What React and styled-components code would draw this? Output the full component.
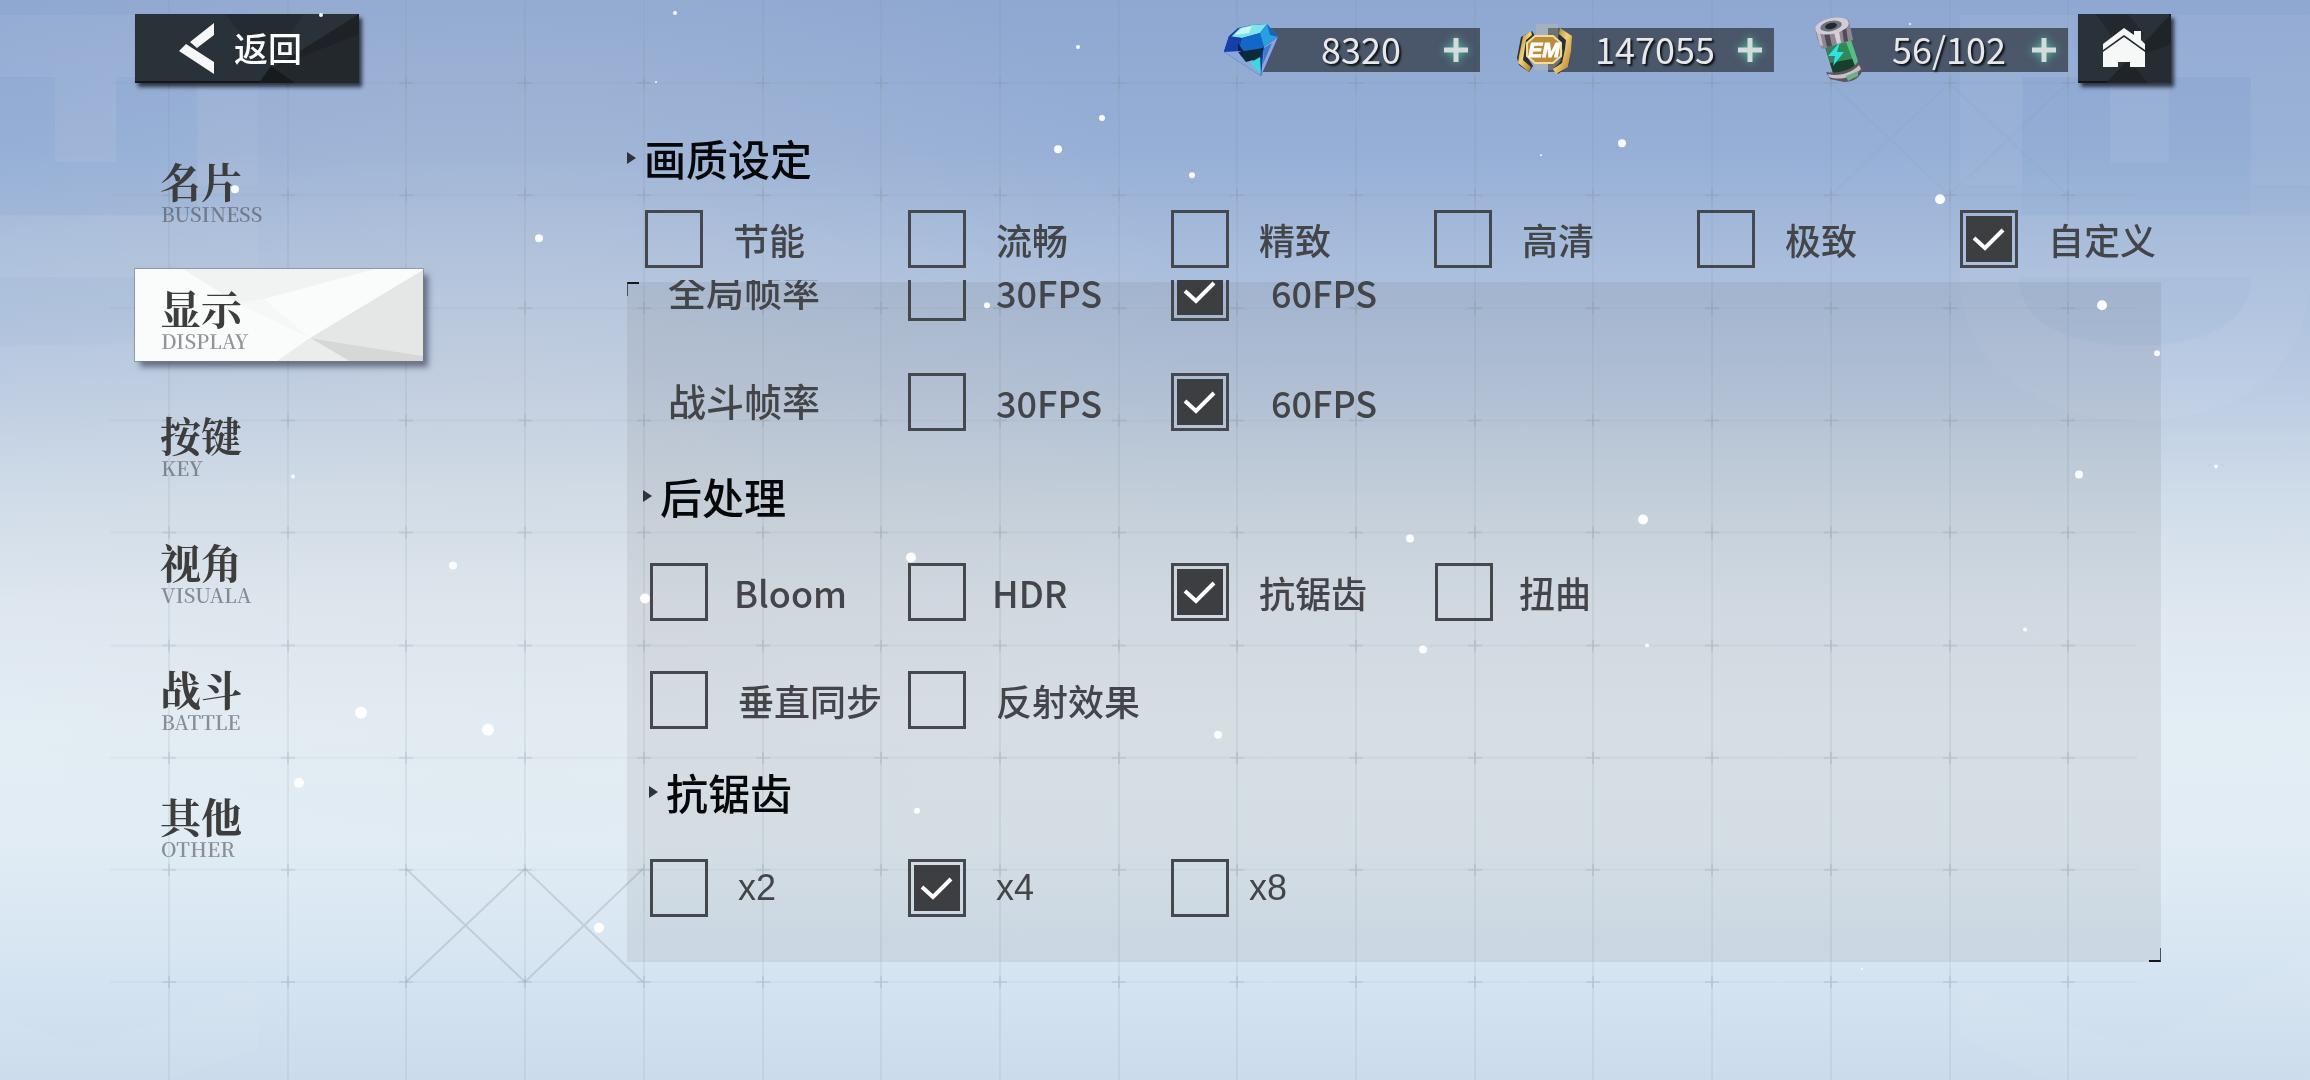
import React, { useState } from 'react';
import styled, { createGlobalStyle } from 'styled-components';

const GlobalStyle = createGlobalStyle`
  * {
    box-sizing: border-box;
  }

  body {
    margin: 0;
    font-family: 'Noto Sans CJK SC', 'Noto Sans', sans-serif;
    color: #434548;
  }

  button {
    font: inherit;
    color: inherit;
    border: none;
    padding: 0;
    background: none;
    cursor: pointer;
  }
`;

const Page = styled.div`
  position: relative;
  min-height: 100vh;
  overflow: hidden;
  padding: 14px 139px 119px 135px;
  background:
    radial-gradient(ellipse 700px 520px at 500px 380px, rgba(220, 218, 216, 0.26), rgba(220, 218, 216, 0)),
    linear-gradient(
      180deg,
      #8fa8d1 0%,
      #96afd6 14%,
      #a8bddc 24%,
      #b9cae2 35%,
      #cfdce9 46%,
      #dee7f0 56%,
      #e3edf4 67%,
      #e1ecf4 78%,
      #d6e5f2 89%,
      #cbdbec 100%
    );
`;

const Layer = styled.svg`
  position: absolute;
  inset: 0;
  width: 100%;
  height: 100%;
  pointer-events: none;
`;

const Header = styled.header`
  position: relative;
  display: flex;
  align-items: flex-start;
`;

const DarkButton = styled.button`
  position: relative;
  display: flex;
  align-items: center;
  justify-content: center;
  gap: 20px;
  width: ${({ $wide }) => ($wide ? '224px' : '93px')};
  height: 69px;
  padding: ${({ $wide }) => ($wide ? '0 13px 2px 0' : '0 2px 2px 0')};
  background: #2a3239;
  box-shadow: inset -2px -2px 0 #14171a, 3px 4px 4px rgba(10, 15, 25, 0.75);
  color: #fff;
  font-size: 34px;
  font-weight: 500;
  line-height: 40px;
`;

const Facets = styled.svg`
  position: absolute;
  inset: 0;
  width: 100%;
  height: 100%;
`;

const Glyph = styled.svg`
  position: relative;
  display: block;
`;

const ButtonText = styled.span`
  position: relative;
`;

const Wallet = styled.div`
  display: flex;
  gap: 68px;
  margin-left: auto;
  margin-right: 10px;
  padding-top: 14px;
`;

const Currency = styled.div`
  position: relative;
  display: flex;
  align-items: center;
  width: 226px;
  height: 44px;
  padding: 0 10px 0 26px;
  background: rgba(40, 46, 54, 0.68);
`;

const CurrencyIcon = styled.svg`
  position: absolute;
  left: -32px;
  top: -12px;
  overflow: visible;
`;

const Amount = styled.span`
  flex: 1;
  padding-bottom: 4px;
  text-align: center;
  font-size: 36px;
  line-height: 40px;
  color: #e6e8ea;
  text-shadow: 2px 2px 2px rgba(0, 0, 0, 0.8);
`;

const PlusButton = styled.button`
  width: 28px;
  height: 28px;

  svg {
    display: block;
    filter: drop-shadow(0 0 4px #4fc8a8);
  }
`;

const Main = styled.main`
  position: relative;
  display: flex;
  gap: 204px;
  padding-right: 10px;
`;

const Nav = styled.nav`
  display: flex;
  flex-direction: column;
  flex: 0 0 288px;
  gap: 35px;
  padding-top: 59px;
`;

const Tab = styled.button`
  position: relative;
  display: flex;
  flex-direction: column;
  align-items: flex-start;
  height: 92px;
  padding: 17px 0 0 25px;
  text-align: left;
  background: ${({ $active }) => ($active ? '#fafbfb' : 'none')};
  box-shadow: ${({ $active }) =>
    $active ? '0 0 0 1px rgba(120, 125, 130, 0.6), 5px 6px 6px rgba(40, 50, 70, 0.6)' : 'none'};
`;

const TabTitle = styled.span`
  position: relative;
  font-family: 'Noto Serif CJK SC', 'Noto Sans CJK SC', serif;
  font-size: 41px;
  font-weight: 700;
  line-height: 44px;
  color: #3d3d3d;
`;

const TabSub = styled.span`
  position: relative;
  padding-left: 1px;
  font-family: 'Noto Serif CJK SC', 'Liberation Serif', serif;
  font-size: 20px;
  font-weight: 600;
  line-height: 22px;
  color: rgba(70, 74, 82, 0.58);
`;

const Content = styled.div`
  flex: 1;
  min-width: 0;
  padding-top: 53px;
`;

const Heading = styled.h2`
  display: flex;
  align-items: center;
  gap: 8px;
  margin: 0;
  font-size: 42px;
  font-weight: 500;
  line-height: 44px;
  color: #060708;

  &::before {
    content: '';
    border-left: 9px solid #2e3338;
    border-top: 6px solid transparent;
    border-bottom: 6px solid transparent;
  }
`;

const PanelHeading = styled(Heading)`
  margin: ${({ $deep }) => ($deep ? '41px 0 45px 22px' : '43px 0 45px 16px')};
`;

const QualityRow = styled.div`
  display: flex;
  justify-content: space-between;
  padding: 30px 5px 12px 18px;
`;

const Panel = styled.section`
  position: relative;

  &::before,
  &::after {
    content: '';
    position: absolute;
    width: 11px;
    height: 12px;
  }

  &::before {
    left: 0;
    top: 2px;
    border-top: 2px solid #15181b;
    border-left: 1px solid #4a5056;
  }

  &::after {
    right: 0;
    bottom: 0;
    border-bottom: 2px solid #15181b;
    border-right: 1px solid #4a5056;
  }
`;

const Scroller = styled.div`
  overflow: hidden;
  padding-bottom: 45px;
  background: linear-gradient(180deg, transparent 2px, rgba(50, 42, 34, 0.075) 2px);
`;

const ScrollBody = styled.div`
  margin-top: -17px;
`;

const OptionGrid = styled.div`
  display: grid;
  grid-template-columns: 258px 263px 264px 1fr;
  align-items: center;
  row-gap: ${({ $loose }) => ($loose ? '52px' : '50px')};
  padding-left: 23px;
`;

const RowName = styled.span`
  padding: 0 0 4px 18px;
  font-size: 38px;
  font-weight: 500;
  line-height: 44px;
`;

const Option = styled.label`
  display: flex;
  align-items: center;
  gap: ${({ $gap }) => $gap || 30}px;
  font-size: 36px;
  font-weight: 500;
  line-height: 44px;
  white-space: nowrap;
  cursor: pointer;
`;

const LatinText = styled.span`
  font-family: 'Liberation Sans', sans-serif;
  font-weight: 400;
`;

const BoxWrap = styled.span`
  display: grid;
  width: 58px;
  height: 58px;

  > * {
    grid-area: 1 / 1;
  }
`;

const Box = styled.input`
  appearance: none;
  width: 58px;
  height: 58px;
  margin: 0;
  padding: 3px;
  border: 3px solid #45494d;
  cursor: pointer;

  &:checked {
    background: #3d3e41 content-box;
  }

  & + svg {
    visibility: hidden;
    pointer-events: none;
  }

  &:checked + svg {
    visibility: visible;
  }
`;

const columns = Array.from({ length: 17 }, (_, i) => Math.round(169 + i * 118.7));
const rows = Array.from({ length: 9 }, (_, i) => Math.round(83 + i * 112.3));

const flakes = [
  [321, 15, 2], [675, 13, 2], [1078, 47, 2], [1102, 118, 3], [1058, 149, 4],
  [1192, 175, 3], [1622, 143, 4], [1541, 155, 1], [1940, 199, 5], [539, 238, 4],
  [987, 305, 3], [2102, 305, 5], [2157, 353, 3], [2079, 474, 4], [2216, 466, 2],
  [1643, 519, 5], [1410, 538, 4], [911, 557, 5], [453, 565, 4], [645, 598, 5],
  [1423, 649, 4], [1647, 645, 2], [2025, 629, 2], [361, 712, 6], [488, 729, 6],
  [1218, 734, 4], [299, 782, 5], [917, 810, 3], [599, 927, 5], [293, 476, 2],
  [235, 189, 4], [1862, 968, 1], [1910, 24, 1], [656, 82, 1],
];

const tabs = [
  { id: 'business', title: '名片', sub: 'BUSINESS' },
  { id: 'display', title: '显示', sub: 'DISPLAY' },
  { id: 'key', title: '按键', sub: 'KEY' },
  { id: 'visual', title: '视角', sub: 'VISUALA' },
  { id: 'battle', title: '战斗', sub: 'BATTLE' },
  { id: 'other', title: '其他', sub: 'OTHER' },
];

const qualities = ['节能', '流畅', '精致', '高清', '极致', '自定义'];

const Backdrop = () => (
  <Layer viewBox="0 0 2310 1080" preserveAspectRatio="none" aria-hidden="true">
    {/* oversized block letters, barely visible */}
    <g fill="#fff" opacity="0.05">
      <path d="M0 15H258V185H197V77H0Z" />
      <path d="M55 77H116V162H55Z" />
      <path d="M0 215H258V277H0Z" />
      <path d="M1960 15H2310V77H2022V185H1960Z" />
      <path d="M2110 77H2169V162H2110ZM2251 77H2310V185H2251Z" />
      <path d="M1960 215H2310V290C2300 370 2240 420 2136 420C2020 420 1960 350 1960 277Z" />
      <path d="M1960 530H2310V680C2290 770 2200 760 2136 760C2020 750 1960 690 1960 600Z" opacity="0.5" />
      <path d="M1960 985L2138 1048L2310 950V1080H2050L1960 1035Z" />
      <path d="M258 985L84 1048L0 1015V1080H160L258 1048Z" />
    </g>
    <g fill="#7ba2d0" opacity="0.1">
      <path d="M0 77H55V162H116V77H197V215H0Z" />
      <path d="M0 277H230C220 330 170 345 60 345H0Z" opacity="0.5" />
      <path d="M2022 77H2110V162H2169V77H2251V215H2022Z" opacity="0.7" />
      <path d="M2019 277H2251C2251 325 2200 345 2136 345S2019 325 2019 277Z" opacity="0.8" />
    </g>
    <g stroke="#7d8894" strokeWidth="2">
      <g opacity="0.12">
        {columns.map((x) => (
          <line key={x} x1={x} y1="0" x2={x} y2="1080" />
        ))}
      </g>
      <g opacity="0.07">
        {rows.map((y) => (
          <line key={y} x1="110" y1={y} x2="2137" y2={y} />
        ))}
      </g>
      <g opacity="0.17">
        {rows.map((y) =>
          columns.map((x) => <path key={`${x}-${y}`} d={`M${x - 7} ${y}h14M${x} ${y - 6}v12`} />)
        )}
      </g>
      <path d="M406 868L525 981L643 868M406 981L525 868L643 981" fill="none" opacity="0.26" />
      <path d="M1831 83L1949 195L2068 83M1831 195L1949 83L2068 195" fill="none" opacity="0.07" />
    </g>
  </Layer>
);

const Snow = () => (
  <Layer viewBox="0 0 2310 1080" preserveAspectRatio="none" aria-hidden="true">
    {flakes.map(([x, y, r]) => (
      <circle key={`${x}-${y}`} cx={x} cy={y} r={r} fill="#fff" opacity="0.95" />
    ))}
  </Layer>
);

const Diamond = () => (
  <CurrencyIcon width="58" height="60" viewBox="0 0 58 60" aria-hidden="true">
    <path d="M7 20L16 12L30 9L44 8L56 21L39 60L2 36Z" fill="#0c3f9e" />
    <path d="M9 21L18 12L30 9L45 8L38 17L20 22Z" fill="#7fe3ee" />
    <path d="M12 19L20 12L30 10L27 17Z" fill="#c4f7f2" />
    <path d="M20 22L38 17L42 31L28 38L16 33Z" fill="#1268c6" />
    <path d="M38 17L45 8L56 21L42 31Z" fill="#2a9fe0" />
    <path d="M45 8L56 21L48 19Z" fill="#1565c4" />
    <path d="M7 20L20 22L16 35L2 35Z" fill="#1540a8" />
    <path d="M16 27L22 36L16 37Z" fill="#0a1c4c" />
    <path d="M2 36L18 35L36 48L39 60Z" fill="#8ba6dc" />
    <path d="M16 36L42 32L38 42L24 46Z" fill="#0b2b3d" />
    <path d="M28 47L38 41L39 58Z" fill="#3fd9dd" />
    <path d="M42 31L56 21L39 60Z" fill="#8fa4de" />
    <path d="M42 32L50 27L41 48Z" fill="#3a7ad0" />
  </CurrencyIcon>
);

const Medal = () => (
  <CurrencyIcon width="60" height="60" viewBox="0 0 60 60" aria-hidden="true">
    <defs>
      <linearGradient id="gold" x1="0" y1="0" x2="1" y2="1">
        <stop offset="0" stopColor="#8d6420" />
        <stop offset="0.45" stopColor="#f1d27a" />
        <stop offset="1" stopColor="#a8741d" />
      </linearGradient>
    </defs>
    <path d="M20 8H42L44 54H18Z" fill="#e2c68a" opacity="0.25" />
    <path d="M16 15L19 20L13 29L12 42L17 50L13 56L3 49L1 42L5 21Z" fill="#2b3038" />
    <path d="M15 15L7 20L3 40L2 47L13 56L15 51L7 44L10 24L16 19Z" fill="url(#gold)" />
    <path d="M44 14L42 22L47 35L45 45L38 52L42 58L53 50L56 22Z" fill="#2b3038" />
    <path d="M44 12L56 20L55 35L52 51L40 58L37 53L46 47L49 33L50 24L43 18Z" fill="url(#gold)" />
    <path d="M19 20H37L45 27V40L37 47H19L11 40V27Z" fill="#b98d3a" stroke="#f3dc98" strokeWidth="2" />
    <text
      x="28"
      y="41"
      textAnchor="middle"
      fontFamily="Liberation Sans, sans-serif"
      fontSize="21"
      fontWeight="700"
      fontStyle="italic"
      fill="#fff"
      stroke="#fff"
      strokeWidth="1"
    >
      EM
    </text>
  </CurrencyIcon>
);

const Battery = () => (
  <CurrencyIcon width="58" height="66" viewBox="0 0 58 66" aria-hidden="true">
    <path d="M14 28L41 24L50 52L24 60Z" fill="#2f8a55" />
    <path d="M14 28L20 27L28 58L24 60Z" fill="#3b7d5c" />
    <path d="M20 47L47 42L50 52L24 60Z" fill="#173f2c" />
    <path d="M36 26L41 24L49 48L45 50Z" fill="#58bd84" />
    <path d="M5 12L39 4L43 24L12 33L7 22Z" fill="#8f8794" />
    <path d="M14 17L19 16L22 30L17 31ZM32 12L36 11L38 25L34 26Z" fill="#504a56" />
    <path d="M24 16L29 15L31 27L27 28Z" fill="#d8d0d8" />
    <path d="M6 14L10 16L13 30L10 29Z" fill="#c6bec8" />
    <ellipse cx="22" cy="10" rx="17" ry="8" transform="rotate(-12 22 10)" fill="#d3ccd4" />
    <ellipse cx="21" cy="10" rx="11" ry="5" transform="rotate(-12 21 10)" fill="#6e7180" />
    <ellipse cx="21" cy="10" rx="6" ry="3" transform="rotate(-12 21 10)" fill="#23272f" />
    <path d="M16 56C28 58 44 54 48 45L53 51C52 62 42 66 34 66L20 63Z" fill="#5b5560" />
    <path d="M18 58C28 61 42 57 49 49L51 53C44 61 30 65 19 61Z" fill="#c9bfc9" />
    <path d="M36 60L48 55L48 60L38 65Z" fill="#6fae86" />
    <path d="M30 26L18 40L25 40L23 50L34 36L27 36Z" fill="#2fe0e4" />
  </CurrencyIcon>
);

const Plus = () => (
  <svg width="28" height="28" viewBox="0 0 28 28" aria-hidden="true">
    <path d="M14 2V26M2 14H26" stroke="#d3dcda" strokeWidth="5" />
  </svg>
);

const Tick = () => (
  <svg width="58" height="58" viewBox="0 0 58 58" aria-hidden="true">
    <path d="M14 28L25 38L43 20" fill="none" stroke="#fff" strokeWidth="4" />
  </svg>
);

const CurrencyBar = ({ icon, value, name }) => (
  <Currency>
    {icon}
    <Amount>{value}</Amount>
    <PlusButton type="button" aria-label={name}>
      <Plus />
    </PlusButton>
  </Currency>
);

const Choice = ({ type = 'checkbox', name, checked, gap, latin, children }) => (
  <Option $gap={gap}>
    <BoxWrap>
      <Box type={type} name={name} defaultChecked={checked} />
      <Tick />
    </BoxWrap>
    {latin ? <LatinText>{children}</LatinText> : <span>{children}</span>}
  </Option>
);

const App = () => {
  const [activeTab, setActiveTab] = useState('display');

  return (
    <Page>
      <GlobalStyle />
      <Backdrop />
      <Header>
        <DarkButton type="button" $wide>
          <Facets viewBox="0 0 224 69" preserveAspectRatio="none" aria-hidden="true">
            <path d="M90 0H168L136 52L112 28Z" fill="#252c31" />
            <path d="M224 0L136 55L160 69H224Z" fill="#1e2226" />
            <path d="M136 55L224 20V69H124Z" fill="#23282c" />
            <path d="M136 52L160 69H124Z" fill="#181b1d" />
          </Facets>
          <Glyph width="35" height="52" viewBox="179 21 35 52" aria-hidden="true">
            <path d="M214 22V34L197 47L190 41ZM186 43L214 61V73L179 50Z" fill="#f6f7f7" />
          </Glyph>
          <ButtonText>返回</ButtonText>
        </DarkButton>
        <Wallet>
          <CurrencyBar icon={<Diamond />} value="8320" name="add diamonds" />
          <CurrencyBar icon={<Medal />} value="147055" name="add coins" />
          <CurrencyBar icon={<Battery />} value="56/102" name="add energy" />
        </Wallet>
        <DarkButton type="button" aria-label="home">
          <Facets viewBox="0 0 93 69" preserveAspectRatio="none" aria-hidden="true">
            <path d="M18 0H50L66 20L45 40Z" fill="#22292e" />
            <path d="M93 0L28 69H93Z" fill="#1f2428" />
            <path d="M50 46L93 30V69H70Z" fill="#262c31" />
          </Facets>
          <Glyph width="42" height="40" viewBox="0 0 42 40" aria-hidden="true">
            <path d="M21 0L31 7V3H38V12L42 16V22L21 7L0 22V16Z" fill="#f6f7f7" />
            <path d="M21 9L42 24V39H27V34H15V39H0V24Z" fill="#f6f7f7" />
          </Glyph>
        </DarkButton>
      </Header>
      <Main>
        <Nav>
          {tabs.map((tab) => (
            <Tab
              key={tab.id}
              type="button"
              $active={tab.id === activeTab}
              onClick={() => setActiveTab(tab.id)}
            >
              {tab.id === activeTab && (
                <Facets viewBox="0 0 288 92" preserveAspectRatio="none" aria-hidden="true">
                  <path d="M48 0H240L129 30L102 34Z" fill="#f1f2f2" />
                  <path d="M102 34L129 30L175 69Z" fill="#f6f7f7" />
                  <path d="M288 1L175 69L288 87Z" fill="#e5e6e6" />
                  <path d="M175 69L288 87V92H214Z" fill="#d6d7d7" />
                  <path d="M175 69L214 92H142Z" fill="#ebecec" />
                </Facets>
              )}
              <TabTitle>{tab.title}</TabTitle>
              <TabSub>{tab.sub}</TabSub>
            </Tab>
          ))}
        </Nav>
        <Content>
          <Heading>画质设定</Heading>
          <QualityRow>
            {qualities.map((quality) => (
              <Choice key={quality} type="radio" name="quality" checked={quality === '自定义'}>
                {quality}
              </Choice>
            ))}
          </QualityRow>
          <Panel>
            <Scroller>
              <ScrollBody>
                <OptionGrid $loose>
                  <RowName>全局帧率</RowName>
                  <Choice type="radio" name="globalFps">30FPS</Choice>
                  <Choice type="radio" name="globalFps" checked gap={42}>60FPS</Choice>
                  <span />
                  <RowName>战斗帧率</RowName>
                  <Choice type="radio" name="battleFps">30FPS</Choice>
                  <Choice type="radio" name="battleFps" checked gap={42}>60FPS</Choice>
                </OptionGrid>
                <PanelHeading>后处理</PanelHeading>
                <OptionGrid>
                  <Choice gap={26}>Bloom</Choice>
                  <Choice gap={26}>HDR</Choice>
                  <Choice checked>抗锯齿</Choice>
                  <Choice gap={26}>扭曲</Choice>
                  <Choice>垂直同步</Choice>
                  <Choice>反射效果</Choice>
                </OptionGrid>
                <PanelHeading $deep>抗锯齿</PanelHeading>
                <OptionGrid>
                  <Choice type="radio" name="msaa" latin>x2</Choice>
                  <Choice type="radio" name="msaa" latin checked>x4</Choice>
                  <Choice type="radio" name="msaa" latin gap={20}>x8</Choice>
                </OptionGrid>
              </ScrollBody>
            </Scroller>
          </Panel>
        </Content>
      </Main>
      <Snow />
    </Page>
  );
};

export default App;
